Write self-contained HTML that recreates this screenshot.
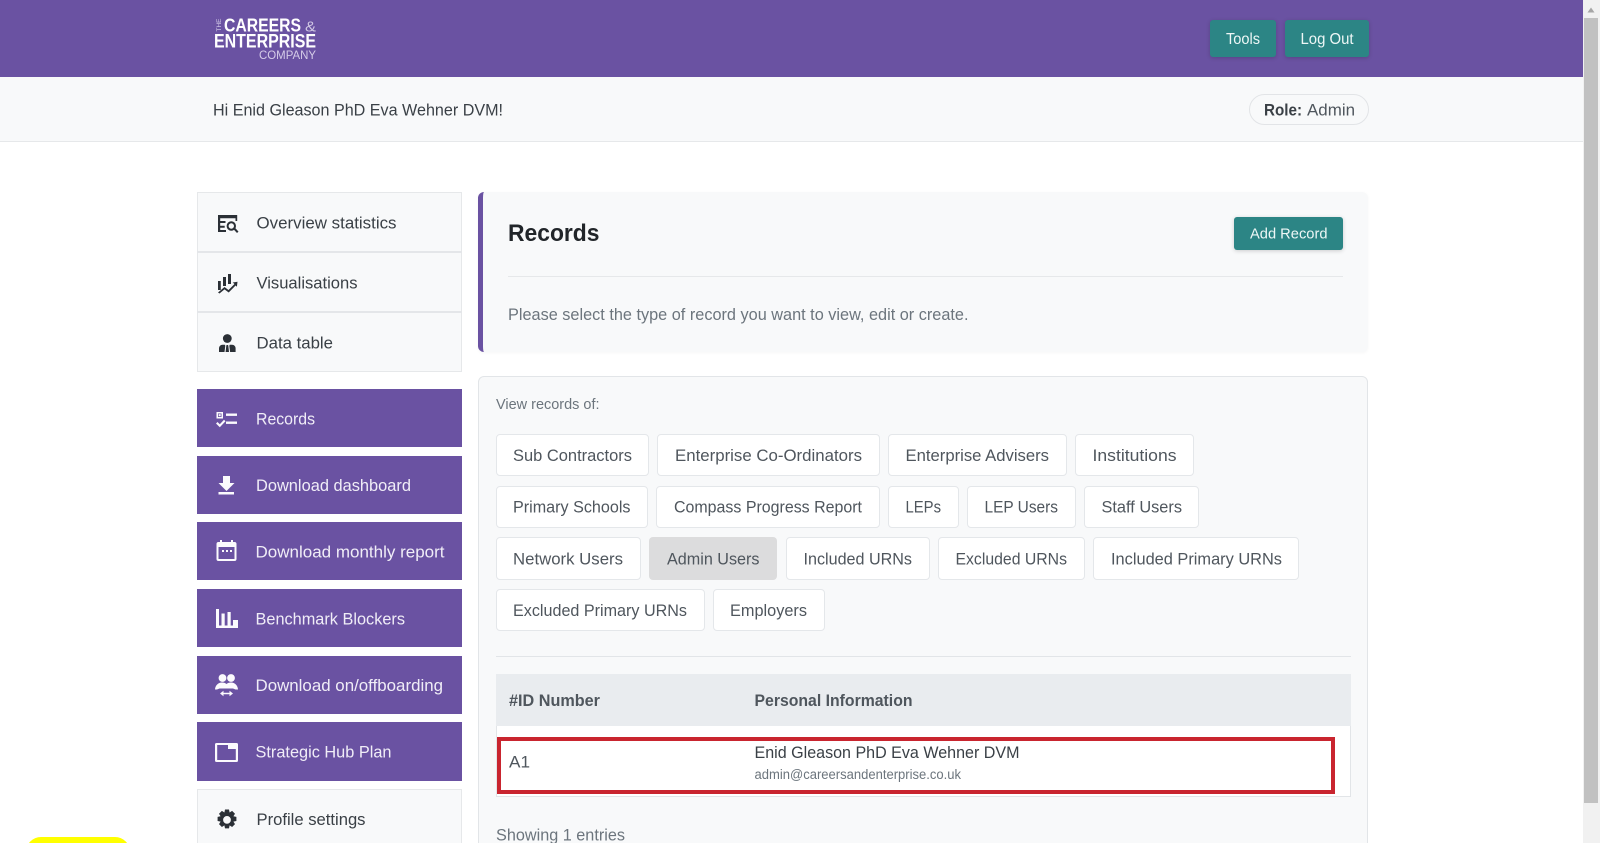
<!DOCTYPE html>
<html lang="en">
<head>
<meta charset="utf-8">
<title>Records</title>
<style>
html,body{margin:0;padding:0;width:1600px;height:843px;overflow:hidden;background:#fff;font-family:"Liberation Sans",sans-serif}
#page{position:relative;width:1600px;height:843px;overflow:hidden;background:#fff}
.b{position:absolute;box-sizing:border-box}
.p{background:#6a52a2;left:197px;width:264.500px}
.chip{background:#fff;border:1px solid #e4e7ea;border-radius:4px}
.teal{background:#2c8585;border-radius:3px;box-shadow:0 1px 4px rgba(0,0,0,.18)}
svg{position:absolute;left:0;top:0}
text{font-family:"Liberation Sans",sans-serif;font-size:17px}
.d{fill:#3a4046}
.w{fill:#f0edf7}
.c{fill:#4f565d}
.m{fill:#6c757d}
</style>
</head>
<body>
<div id="page">
<div class="b" style="left:0;top:0;width:1583px;height:77px;background:#6a52a2"></div>
<div class="b" style="left:0;top:77px;width:1583px;height:65px;background:#f8f9fa;border-bottom:1px solid #e6e8ea"></div>
<div class="b teal" style="left:1210px;top:20px;width:66px;height:37px"></div>
<div class="b teal" style="left:1285px;top:20px;width:84px;height:37px"></div>
<div class="b" style="left:1249px;top:94px;width:120px;height:31px;border:1px solid #e2e4e7;border-radius:16px"></div>

<div class="b" style="left:197px;top:192px;width:264.500px;height:180px;background:#f8f9fa;border:1px solid #e6e8ea"></div>
<div class="b" style="left:197px;top:251px;width:264.500px;height:2px;background:#e4e6e9"></div>
<div class="b" style="left:197px;top:311px;width:264.500px;height:2px;background:#e4e6e9"></div>
<div class="b p" style="top:389px;height:58px"></div>
<div class="b p" style="top:455.500px;height:58.500px"></div>
<div class="b p" style="top:522px;height:58px"></div>
<div class="b p" style="top:589px;height:58px"></div>
<div class="b p" style="top:655.500px;height:58.500px"></div>
<div class="b p" style="top:722px;height:58.500px"></div>
<div class="b" style="left:197px;top:789px;width:264.500px;height:60px;background:#f8f9fa;border:1px solid #e6e8ea"></div>

<div class="b" style="left:478px;top:192px;width:890px;height:160px;background:#f8f9fa;border-left:5px solid #6a52a2;border-radius:6px;box-shadow:0 1px 3px rgba(0,0,0,.04)"></div>
<div class="b teal" style="left:1234px;top:217px;width:109px;height:33px"></div>
<div class="b" style="left:508px;top:275.500px;width:835px;height:1px;background:#e6e8ea"></div>

<div class="b" style="left:478px;top:376px;width:890px;height:480px;background:#f8f9fa;border:1px solid #e2e5e8;border-radius:6px"></div>

<div class="b chip" style="left:495.5px;top:433.500px;width:153px;height:42.500px"></div>
<div class="b chip" style="left:657px;top:433.500px;width:222.500px;height:42.500px"></div>
<div class="b chip" style="left:888px;top:433.500px;width:178.500px;height:42.500px"></div>
<div class="b chip" style="left:1075px;top:433.500px;width:119px;height:42.500px"></div>

<div class="b chip" style="left:495.5px;top:485.500px;width:152px;height:42px"></div>
<div class="b chip" style="left:656px;top:485.500px;width:223.500px;height:42px"></div>
<div class="b chip" style="left:888px;top:485.500px;width:71px;height:42px"></div>
<div class="b chip" style="left:967px;top:485.500px;width:108.500px;height:42px"></div>
<div class="b chip" style="left:1084px;top:485.500px;width:115px;height:42px"></div>

<div class="b chip" style="left:495.5px;top:536.500px;width:145px;height:43px"></div>
<div class="b" style="left:649px;top:536.500px;width:128px;height:43px;background:#dcdcdd;border-radius:4px"></div>
<div class="b chip" style="left:786px;top:536.500px;width:144px;height:43px"></div>
<div class="b chip" style="left:938px;top:536.500px;width:147px;height:43px"></div>
<div class="b chip" style="left:1093px;top:536.500px;width:206px;height:43px"></div>

<div class="b chip" style="left:495.5px;top:588.500px;width:209px;height:42.500px"></div>
<div class="b chip" style="left:713px;top:588.500px;width:111.500px;height:42.500px"></div>

<div class="b" style="left:495.500px;top:656px;width:855px;height:1px;background:#e2e5e8"></div>
<div class="b" style="left:495.500px;top:673.500px;width:855px;height:123px;background:#fff;border:1px solid #e2e5e8"></div>
<div class="b" style="left:495.500px;top:673.500px;width:855px;height:52px;background:#e9ecef"></div>
<div class="b" style="left:497px;top:736.500px;width:838px;height:57.500px;border:4px solid #c9252f"></div>

<div class="b" style="left:26px;top:837px;width:104px;height:30px;background:#ffff00;border-radius:15px"></div>

<div class="b" style="left:1583px;top:0;width:17px;height:843px;background:#f1f1f1"></div>
<div class="b" style="left:1584px;top:18px;width:14px;height:785px;background:#c1c1c1"></div>

<svg width="1600" height="843" viewBox="0 0 1600 843" xmlns="http://www.w3.org/2000/svg">
<path d="M1587.5 12.5l3.5-5 3.5 5z" fill="#a6a6a6"/>

<!-- logo -->
<text x="224" y="31.5" textLength="77" lengthAdjust="spacingAndGlyphs" style="font-size:18.500px;font-weight:700" fill="#fff">CAREERS</text>
<text x="305" y="31.5" textLength="11" lengthAdjust="spacingAndGlyphs" style="font-size:15px" fill="#cfc6e3">&amp;</text>
<text x="214" y="47.5" textLength="102" lengthAdjust="spacingAndGlyphs" style="font-size:19.500px;font-weight:700" fill="#fff">ENTERPRISE</text>
<text x="259" y="59" textLength="57" lengthAdjust="spacingAndGlyphs" style="font-size:11.500px" fill="#d5cce8">COMPANY</text>
<text transform="translate(221 31.500) rotate(-90)" x="0" y="0" textLength="13" lengthAdjust="spacingAndGlyphs" style="font-size:6.500px" fill="#d5cce8">THE</text>

<!-- header text -->
<text x="1226" y="44" textLength="34" lengthAdjust="spacingAndGlyphs" style="font-size:15.500px" fill="#eef7f6">Tools</text>
<text x="1300.5" y="44" textLength="53" lengthAdjust="spacingAndGlyphs" style="font-size:15.500px" fill="#eef7f6">Log Out</text>
<text x="213" y="115.500" textLength="290" lengthAdjust="spacingAndGlyphs" class="d">Hi Enid Gleason PhD Eva Wehner DVM!</text>
<text x="1264" y="115.500" textLength="38" lengthAdjust="spacingAndGlyphs" class="d" style="font-weight:700">Role:</text>
<text x="1307" y="115.500" textLength="48" lengthAdjust="spacingAndGlyphs" class="c">Admin</text>

<!-- side nav text -->
<text x="256.5" y="228.500" textLength="140" lengthAdjust="spacingAndGlyphs" class="d">Overview statistics</text>
<text x="256.5" y="288.500" textLength="101" lengthAdjust="spacingAndGlyphs" class="d">Visualisations</text>
<text x="256.5" y="348.500" textLength="76.5" lengthAdjust="spacingAndGlyphs" class="d">Data table</text>
<text x="256" y="424.300" textLength="59" lengthAdjust="spacingAndGlyphs" class="w">Records</text>
<text x="256" y="490.800" textLength="155" lengthAdjust="spacingAndGlyphs" class="w">Download dashboard</text>
<text x="255.5" y="557.300" textLength="189" lengthAdjust="spacingAndGlyphs" class="w">Download monthly report</text>
<text x="255.5" y="624.300" textLength="149.5" lengthAdjust="spacingAndGlyphs" class="w">Benchmark Blockers</text>
<text x="255.5" y="690.800" textLength="187.5" lengthAdjust="spacingAndGlyphs" class="w">Download on/offboarding</text>
<text x="255.5" y="757.300" textLength="136" lengthAdjust="spacingAndGlyphs" class="w">Strategic Hub Plan</text>
<text x="256.5" y="824.800" textLength="109" lengthAdjust="spacingAndGlyphs" class="d">Profile settings</text>

<!-- records card -->
<text x="508" y="241" textLength="91.5" lengthAdjust="spacingAndGlyphs" style="font-size:24px;font-weight:700" fill="#212529">Records</text>
<text x="1250" y="238.500" textLength="77.5" lengthAdjust="spacingAndGlyphs" style="font-size:15px" fill="#eef7f6">Add Record</text>
<text x="508" y="320" textLength="460.5" lengthAdjust="spacingAndGlyphs" class="m" style="font-size:16.500px">Please select the type of record you want to view, edit or create.</text>

<text x="496" y="409" textLength="103.5" lengthAdjust="spacingAndGlyphs" class="m" style="font-size:14.500px">View records of:</text>

<!-- chips -->
<text x="513" y="461" textLength="119" lengthAdjust="spacingAndGlyphs" class="c">Sub Contractors</text>
<text x="675" y="461" textLength="187" lengthAdjust="spacingAndGlyphs" class="c">Enterprise Co-Ordinators</text>
<text x="905.500" y="461" textLength="143.500" lengthAdjust="spacingAndGlyphs" class="c">Enterprise Advisers</text>
<text x="1092.5" y="461" textLength="84" lengthAdjust="spacingAndGlyphs" class="c">Institutions</text>

<text x="513" y="512.500" textLength="117.5" lengthAdjust="spacingAndGlyphs" class="c">Primary Schools</text>
<text x="674" y="512.500" textLength="188" lengthAdjust="spacingAndGlyphs" class="c">Compass Progress Report</text>
<text x="905.500" y="512.500" textLength="35.500" lengthAdjust="spacingAndGlyphs" class="c">LEPs</text>
<text x="984.5" y="512.500" textLength="73.5" lengthAdjust="spacingAndGlyphs" class="c">LEP Users</text>
<text x="1101.5" y="512.500" textLength="80.5" lengthAdjust="spacingAndGlyphs" class="c">Staff Users</text>

<text x="513" y="564.500" textLength="110" lengthAdjust="spacingAndGlyphs" class="c">Network Users</text>
<text x="667" y="564.500" textLength="92.5" lengthAdjust="spacingAndGlyphs" class="c">Admin Users</text>
<text x="803.500" y="564.500" textLength="108.500" lengthAdjust="spacingAndGlyphs" class="c">Included URNs</text>
<text x="955.500" y="564.500" textLength="111.500" lengthAdjust="spacingAndGlyphs" class="c">Excluded URNs</text>
<text x="1111" y="564.500" textLength="171" lengthAdjust="spacingAndGlyphs" class="c">Included Primary URNs</text>

<text x="513" y="616" textLength="174" lengthAdjust="spacingAndGlyphs" class="c">Excluded Primary URNs</text>
<text x="730" y="616" textLength="77" lengthAdjust="spacingAndGlyphs" class="c">Employers</text>

<!-- table -->
<text x="509" y="705.800" textLength="91" lengthAdjust="spacingAndGlyphs" class="c" style="font-weight:700;font-size:16.500px">#ID Number</text>
<text x="754.5" y="705.800" textLength="158" lengthAdjust="spacingAndGlyphs" class="c" style="font-weight:700;font-size:16.500px">Personal Information</text>
<text x="509" y="767.500" textLength="21" lengthAdjust="spacingAndGlyphs" class="c">A1</text>
<text x="754.5" y="757.800" textLength="265" lengthAdjust="spacingAndGlyphs" class="d">Enid Gleason PhD Eva Wehner DVM</text>
<text x="754.5" y="779" textLength="206.5" lengthAdjust="spacingAndGlyphs" class="m" style="font-size:13.500px">admin@careersandenterprise.co.uk</text>
<text x="496" y="840.500" textLength="129" lengthAdjust="spacingAndGlyphs" class="m" style="font-size:16.500px">Showing 1 entries</text>

<!-- icons: dark -->
<g fill="#2b3036">
<rect x="218" y="215" width="19" height="3.200" rx="1"/>
<rect x="235.500" y="215" width="1.700" height="6"/>
<path d="M218 215h2.200v6h5.300v2h-5.300v2.700h4.500v2h-4.500v2.300h5.800v2h-8z"/>
<circle cx="231.300" cy="226" r="3.700" fill="none" stroke="#2b3036" stroke-width="2"/>
<path d="M233.500 229.300l1.500-1.500 3.500 3.800-1.500 1.400z"/>

<rect x="218" y="281" width="2.800" height="9"/><rect x="223" y="277" width="3" height="9"/><rect x="228" y="274" width="3" height="10"/>
<path d="M218 292.500l6.500-5.500 4 3 6-6-1.800-1.500 4.800-.8-.6 5-1.300-1.200-6.900 7-4.200-3.100-5 4.100z"/>

<circle cx="227.300" cy="338.500" r="4.400"/>
<path d="M219 352v-3.500c0-2 1.500-3.700 3.500-3.700h2.300l.5 1-.8 6.200z"/>
<path d="M235.600 352v-3.500c0-2-1.500-3.700-3.500-3.700h-2.300l-.5 1 .8 6.200z"/>
<path d="M226.500 345h1.600l.3 1.500.6 5.500h-3.400l.6-5.500z"/>

<path transform="translate(-1.500 0.500)" fill-rule="evenodd" d="M226.500 809h4l.6 3 2.500-1.600 2.900 2.900-1.600 2.500 3 .6v4.100l-3 .6 1.600 2.500-2.900 2.900-2.500-1.600-.6 3h-4l-.6-3-2.500 1.600-2.900-2.900 1.600-2.500-3-.6v-4.100l3-.6-1.600-2.500 2.900-2.900 2.500 1.600zm2 6.500a3.900 3.900 0 1 0 0 7.800 3.900 3.900 0 0 0 0-7.800z"/>
</g>

<!-- icons: light -->
<g fill="#fbfafd">
<path fill-rule="evenodd" d="M216.500 412h6.500v6.500h-6.500zm1.500 1.500v3.500h3.500v-3.500z"/>
<rect x="218.700" y="414.200" width="2" height="2"/>
<rect x="226" y="413.500" width="11" height="2.400"/>
<path d="M216 423.500l1.500-1.500 2.300 2.300 4.200-4.500 1.500 1.400-5.700 6z"/>
<rect x="226" y="421.500" width="11" height="2.400"/>

<path d="M223 476h7v7h4.500l-8 8-8-8h4.500z"/>
<rect x="218.500" y="492" width="15.500" height="2.500"/>

<path fill-rule="evenodd" d="M220 540h2v2h9v-2h2v2h1.500a2 2 0 0 1 2 2v15a2 2 0 0 1-2 2h-16a2 2 0 0 1-2-2v-15a2 2 0 0 1 2-2h1.500zm-1.500 7v12h16v-12z"/>
<rect x="222" y="550" width="2" height="2"/><rect x="226" y="550" width="2" height="2"/><rect x="230" y="550" width="2" height="2"/>

<rect x="216" y="609" width="3" height="19"/>
<rect x="216" y="625.500" width="22" height="2.500"/>
<rect x="221.500" y="613.500" width="3.200" height="14"/>
<rect x="227.500" y="612" width="3.200" height="16"/>
<rect x="233" y="620" width="5" height="8"/>

<circle cx="222.500" cy="678" r="3.900"/><circle cx="231" cy="678" r="3.900"/>
<path d="M215 689.500c.2-4 3.200-7 7-7 1.900 0 3.400.6 4.500 1.500 1.100-.9 2.700-1.500 4.500-1.500 3.800 0 6.800 3 7 7h-2.500l-2.500-1h-13.500l-2.500 1z"/>
<path d="M220 693.500l3.500-2.800v2h6v-2l3.500 2.800-3.500 2.800v-2h-6v2z"/>

<path fill-rule="evenodd" d="M216.500 743h20a1.500 1.500 0 0 1 1.500 1.500v16a1.500 1.500 0 0 1-1.500 1.500h-20a1.500 1.500 0 0 1-1.500-1.500v-16a1.500 1.500 0 0 1 1.500-1.500zm.7 2v15h18.600v-11h-7.800v-4z"/>
</g>
</svg>
</div>
</body>
</html>
